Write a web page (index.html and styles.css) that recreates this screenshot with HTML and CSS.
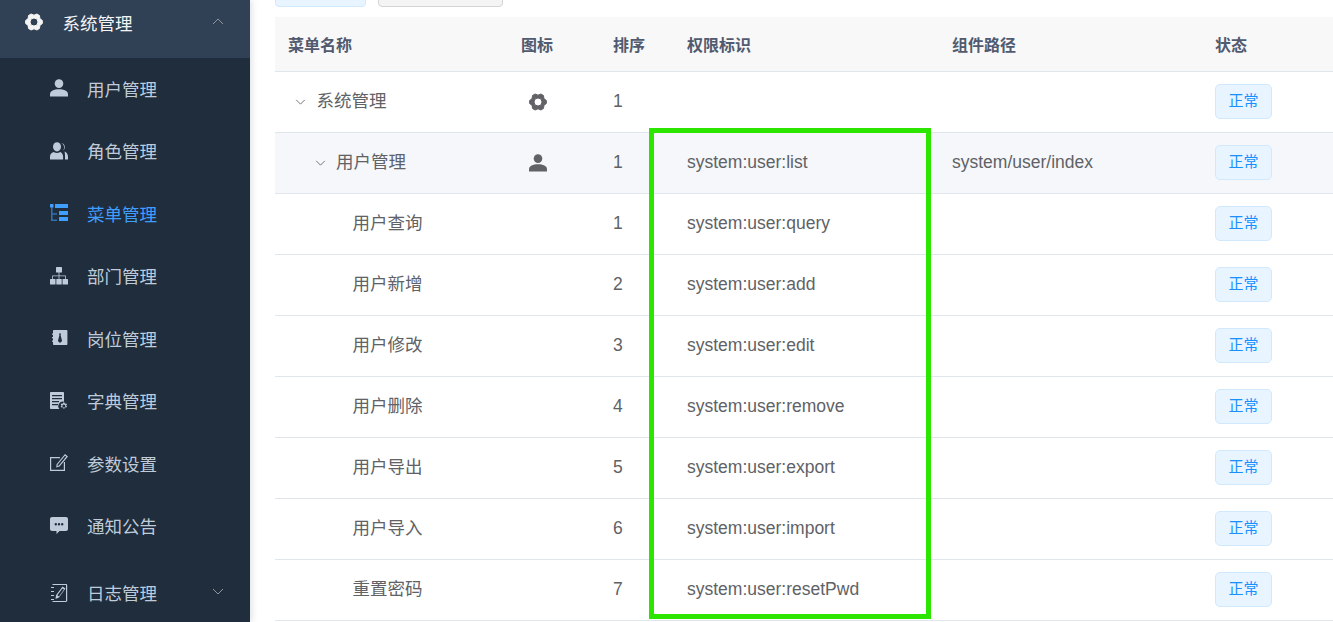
FILE: index.html
```html
<!DOCTYPE html>
<html lang="zh-CN">
<head>
<meta charset="utf-8">
<title>菜单管理</title>
<link rel="stylesheet" href="styles.css">
</head>
<body>
<aside class="sidebar">
  <div class="menu-scroll">
    <div class="menu-title active-parent">
      <svg class="icon" viewBox="0 0 18 18"><path class="gear" fill-rule="evenodd" d="M17.370 10.480 14.890 12.400 14.460 15.510 11.910 16.990 9 15.800 6.090 16.990 3.540 15.510 3.110 12.400.63 10.480V7.520L3.110 5.600 3.540 2.490 6.090 1.010 9 2.200 11.910 1.010 14.460 2.490 14.890 5.600 17.370 7.520ZM13 9a4 4 0 1 1-8 0 4 4 0 0 1 8 0Z"/></svg>
      <span class="title-text">系统管理</span>
      <svg class="chev" viewBox="0 0 12 7"><path d="M1 6 6 1l5 5"/></svg>
    </div>
    <div class="menu-item">
      <svg class="icon" viewBox="0 0 18 18"><ellipse cx="9" cy="4.600" rx="4.300" ry="4.400"/><path d="M0 17.500v-2.300C0 12 4 10.300 9 10.300s9 1.700 9 4.900v2.300H0Z"/></svg>
      <span>用户管理</span>
    </div>
    <div class="menu-item">
      <svg class="icon" viewBox="0 0 18 18"><ellipse cx="7" cy="4.800" rx="4" ry="4.600"/><path d="M0 17.500v-2.800c0-3 2.600-4.500 3.800-4.700 2 1.200 4.300 1.200 6.300 0 1.500.6 3 2 3 4.700v2.800H0Z"/><path d="M11.400.9c2 .2 3.400 2 3.400 4 0 1.600-.8 3-2 3.700 1-1 1.500-2.400 1.300-3.900-.2-1.600-1.200-3-2.700-3.800ZM14.600 9.600c2 .9 3.400 2.800 3.400 5v2.900h-3v-3.500c0-1.700-.2-3-.4-4.400Z"/></svg>
      <span>角色管理</span>
    </div>
    <div class="menu-item selected">
      <svg class="icon" viewBox="0 0 18 18"><rect x="0" y="0" width="3.500" height="3.500" rx=".5"/><path class="dim" d="M1 3h1.600v6.300h4.400v1.500H2.600v4.700h4.400V17H1V3Z"/><rect x="5" y="0" width="13" height="4"/><rect x="9" y="7" width="9" height="4"/><rect x="9" y="13" width="9" height="4"/></svg>
      <span>菜单管理</span>
    </div>
    <div class="menu-item">
      <svg class="icon" viewBox="0 0 18 18"><rect x="6" y="0" width="6" height="5.500" rx=".6"/><rect x="0" y="12" width="5.500" height="5.500" rx=".6"/><rect x="6.300" y="12" width="5.400" height="5.500" rx=".6"/><rect x="12.500" y="12" width="5.500" height="5.500" rx=".6"/><path d="M8.600 5h.8v3.400h6.400V12H15V9.200H9.400V12h-.8V9.200H3V12h-.8V8.400h6.400V5Z"/></svg>
      <span>部门管理</span>
    </div>
    <div class="menu-item">
      <svg class="icon" viewBox="0 0 18 18"><path fill-rule="evenodd" d="M4 1h12.400c.6 0 1 .4 1 1v13c0 .6-.4 1-1 1H4c-.6 0-1-.4-1-1V2c0-.6.4-1 1-1Zm5 3.500.4 1.700-1.500 5.800 2.100 2 2.100-2-1.500-5.800.4-1.700H9Z"/><path d="M2 4.500h2v1.200H2zM2 8h2v1.200H2zM2 11.500h2v1.200H2z"/></svg>
      <span>岗位管理</span>
    </div>
    <div class="menu-item">
      <svg class="icon" viewBox="0 0 18 18"><path fill-rule="evenodd" d="M1 0h12c.6 0 1 .4 1 1v8.700a4.500 4.500 0 0 0-4.600 7.300H1c-.6 0-1-.4-1-1V1c0-.6.4-1 1-1Zm1 3v1.200h10V3H2Zm0 3v1.200h10V6H2Zm0 3v1.200h7V9H2Zm0 3v1.200h6V12H2Z"/><path fill-rule="evenodd" d="M14.500 10.500l.5 1.200 1.300-.3.700 1.100-.9 1 .9 1-.7 1.100-1.300-.3-.5 1.200h-1.300l-.5-1.200-1.300.3-.7-1.100.9-1-.9-1 .7-1.100 1.300.3.500-1.200h1.300Zm-.65 2a1 1 0 1 0 0 3 1 1 0 0 0 0-3Z"/></svg>
      <span>字典管理</span>
    </div>
    <div class="menu-item">
      <svg class="icon" viewBox="0 0 18 18"><path d="M0 3h10v1.200H1.200v11.600h12.600V8H15v9H0V3Z"/><path fill-rule="evenodd" d="M15 0l3 2.400L9.500 12.500l-3.300 1 .4-3.300L15 0Zm0 1.700L7.700 10.600l-.2 1.400 1.400-.4 7.400-9L15 1.700Z"/></svg>
      <span>参数设置</span>
    </div>
    <div class="menu-item">
      <svg class="icon" viewBox="0 0 18 18"><path fill-rule="evenodd" d="M2 0h14c1.100 0 2 .9 2 2v10c0 1.100-.9 2-2 2H9.500L6.500 17v-3H2c-1.100 0-2-.9-2-2V2C0 .9.900 0 2 0Zm3.800 6a1.200 1.200 0 1 0 0 2.400 1.200 1.200 0 0 0 0-2.400Zm3.200 0a1.200 1.200 0 1 0 0 2.400A1.200 1.200 0 0 0 9 6Zm3.200 0a1.200 1.200 0 1 0 0 2.400 1.200 1.200 0 0 0 0-2.400Z"/></svg>
      <span>通知公告</span>
    </div>
    <div class="menu-title">
      <svg class="icon icon-sub" viewBox="0 0 18 18"><path d="M2.500 0H16c.7 0 1.200.5 1.200 1.200v15.600c0 .7-.5 1.200-1.200 1.200H2.500v-1.100H16V1.100H2.500V0Z"/><path d="M1 3h3v1H1zM1 7h3v1H1zM1 11h3v1H1zM1 15h3v1H1z"/><path fill-rule="evenodd" d="M12.500 2.500l3 2L9 13.500l-3.500 1.500.5-3.800 6.500-8.700Zm-.1 2-5 6.800 1.600 1.100 5-6.900-1.600-1Z"/></svg>
      <span class="title-text title-text-sub">日志管理</span>
      <svg class="chev" viewBox="0 0 12 7"><path d="M1 1l5 5 5-5"/></svg>
    </div>
  </div>
</aside>

<main class="main">
  <div class="toolbar">
    <button class="btn btn-primary" aria-label="新增"></button>
    <button class="btn btn-plain" aria-label="展开/折叠"></button>
  </div>
  <table class="grid">
    <colgroup>
      <col class="c-name"><col class="c-icon"><col class="c-order"><col class="c-perm"><col class="c-path"><col class="c-state">
    </colgroup>
    <thead>
      <tr><th>菜单名称</th><th>图标</th><th>排序</th><th>权限标识</th><th>组件路径</th><th>状态</th></tr>
    </thead>
    <tbody>
      <tr>
        <td><span class="tree lv1"><svg class="arrow" viewBox="0 0 12 7"><path d="M1 1l5 5 5-5"/></svg><span class="tree-label">系统管理</span></span></td>
        <td><svg class="cell-icon" viewBox="0 0 18 18"><path class="gear" fill-rule="evenodd" d="M17.370 10.480 14.890 12.400 14.460 15.510 11.910 16.990 9 15.800 6.090 16.990 3.540 15.510 3.110 12.400.63 10.480V7.520L3.110 5.600 3.540 2.490 6.090 1.010 9 2.200 11.910 1.010 14.460 2.490 14.890 5.600 17.370 7.520ZM13 9a4 4 0 1 1-8 0 4 4 0 0 1 8 0Z"/></svg></td>
        <td>1</td><td></td><td></td><td><span class="tag">正常</span></td>
      </tr>
      <tr class="hover">
        <td><span class="tree lv2"><svg class="arrow" viewBox="0 0 12 7"><path d="M1 1l5 5 5-5"/></svg><span class="tree-label">用户管理</span></span></td>
        <td><svg class="cell-icon" viewBox="0 0 18 18"><ellipse cx="9" cy="4.600" rx="4.300" ry="4.400"/><path d="M0 17.500v-2.300C0 12 4 10.300 9 10.300s9 1.700 9 4.900v2.300H0Z"/></svg></td>
        <td>1</td><td>system:user:list</td><td>system/user/index</td><td><span class="tag">正常</span></td>
      </tr>
      <tr><td><span class="tree lv3"><span class="tree-label">用户查询</span></span></td><td></td><td>1</td><td>system:user:query</td><td></td><td><span class="tag">正常</span></td></tr>
      <tr><td><span class="tree lv3"><span class="tree-label">用户新增</span></span></td><td></td><td>2</td><td>system:user:add</td><td></td><td><span class="tag">正常</span></td></tr>
      <tr><td><span class="tree lv3"><span class="tree-label">用户修改</span></span></td><td></td><td>3</td><td>system:user:edit</td><td></td><td><span class="tag">正常</span></td></tr>
      <tr><td><span class="tree lv3"><span class="tree-label">用户删除</span></span></td><td></td><td>4</td><td>system:user:remove</td><td></td><td><span class="tag">正常</span></td></tr>
      <tr><td><span class="tree lv3"><span class="tree-label">用户导出</span></span></td><td></td><td>5</td><td>system:user:export</td><td></td><td><span class="tag">正常</span></td></tr>
      <tr><td><span class="tree lv3"><span class="tree-label">用户导入</span></span></td><td></td><td>6</td><td>system:user:import</td><td></td><td><span class="tag">正常</span></td></tr>
      <tr><td><span class="tree lv3"><span class="tree-label">重置密码</span></span></td><td></td><td>7</td><td>system:user:resetPwd</td><td></td><td><span class="tag">正常</span></td></tr>
    </tbody>
  </table>
  <div class="highlight"></div>
</main>
</body>
</html>
```
FILE: styles.css
```css
* { box-sizing: border-box; }
html, body { height: 100%; }
body {
  margin: 0;
  display: flex;
  height: 622px;
  overflow: hidden;
  background: #fff;
  font-family: "Liberation Sans", "Noto Sans CJK SC", sans-serif;
  color: #606266;
}

.sidebar {
  width: 250px;
  flex: none;
  background: #1f2d3d;
  overflow: hidden;
  box-shadow: 2px 0 6px rgba(0, 21, 41, .12);
  z-index: 1;
}
.menu-scroll { margin-top: -12px; }
.menu-title, .menu-item {
  display: flex;
  align-items: center;
  color: #bfcbd9;
  font-size: 17.5px;
}
.menu-title { height: 70px; padding-left: 25px; }
.active-parent { background: #304156; color: #f4f4f5; }
.menu-item { height: 62.5px; padding-left: 50px; }
.menu-item.selected { color: #409eff; }
.menu-item span { margin-left: 19px; transform: translateY(-1px); }
.icon { width: 18px; height: 18px; fill: currentColor; flex: none; transform: translateY(-1px); }
.icon-sub { margin-left: 25px; transform: translateY(0); }
.title-text { margin-left: 19.5px; flex: 1; transform: translateY(-1px); }
.title-text-sub { margin-left: 19px; }
.gear { stroke: currentColor; stroke-width: 1; stroke-linejoin: round; }
.dim { opacity: .6; }
.chev { width: 12px; height: 7px; margin-right: 26px; fill: none; stroke: #909399; stroke-width: 1; transform: translateY(-2px); }

.main {
  flex: 1;
  min-width: 0;
  position: relative;
  padding-left: 25px;
  overflow: hidden;
}
.toolbar {
  display: flex;
  gap: 12px;
  height: 40px;
  margin-top: -33px;
  margin-bottom: 10px;
}
.btn { height: 40px; padding: 0; border-radius: 4px; border: 1px solid; }
.btn-primary { width: 91px; background: #e8f4ff; border-color: #d1e9ff; }
.btn-plain { width: 125px; background: #f4f4f5; border-color: #d3d4d6; }

.grid {
  border-collapse: collapse;
  table-layout: fixed;
  width: 1058px;
  font-size: 17.5px;
}
.c-name { width: 233px; }
.c-icon { width: 92px; }
.c-order { width: 74px; }
.c-perm { width: 265px; }
.c-path { width: 263px; }
.c-state { width: 131px; }
.grid th {
  height: 54px;
  padding: 0 13px;
  background: #f8f8f9;
  color: #515a6e;
  font-size: 16px;
  font-weight: 700;
  text-align: left;
  border-bottom: 1px solid #dfe6ec;
}
.grid td {
  height: 61px;
  padding: 0 13px;
  border-bottom: 1px solid #dfe6ec;
  white-space: nowrap;
}
.hover td { background: #f5f7fa; }
.tree { display: flex; align-items: center; }
.tree-label { transform: translateY(-2px); }
.lv1 { padding-left: 7px; }
.lv2 { padding-left: 27px; }
.lv3 { padding-left: 64.5px; }
.arrow { width: 11px; height: 6px; margin-right: 10.5px; fill: none; stroke: #606266; stroke-width: 1; flex: none; }
.lv2 .arrow { margin-right: 10px; }
.cell-icon { display: block; width: 18px; height: 18px; margin-left: 8px; fill: currentColor; }
.tag {
  display: inline-block;
  width: 57px;
  height: 35px;
  line-height: 31px;
  text-align: center;
  font-size: 15px;
  color: #1890ff;
  background: #e8f4ff;
  border: 1px solid #d1e9ff;
  border-radius: 5px;
}
.highlight {
  position: absolute;
  left: 399px;
  top: 128px;
  width: 282px;
  height: 491px;
  border: 5px solid #2ce600;
  pointer-events: none;
}
```
